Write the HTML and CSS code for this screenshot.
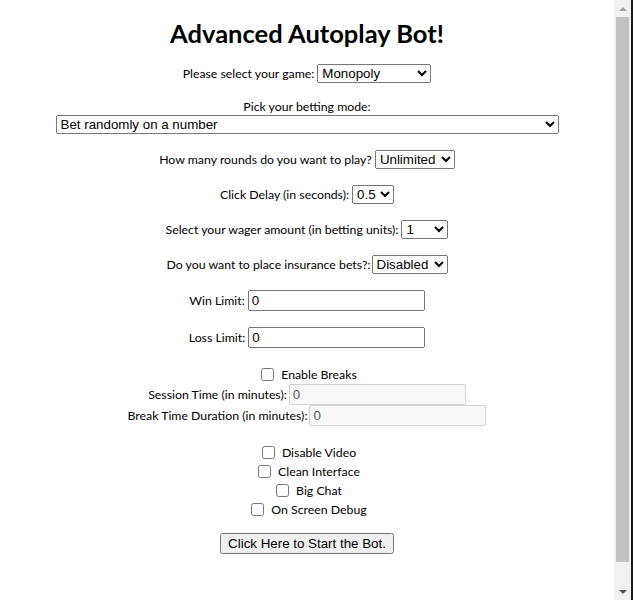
FILE: index.html
```html
<!DOCTYPE html>
<html lang="en">
<head>
<meta charset="utf-8">
<title>Advanced Autoplay Bot</title>
<link rel="stylesheet" href="styles.css">
</head>
<body>
<main class="page">
  <h1 class="title">Advanced Autoplay Bot!</h1>

  <div class="row row-game">
    <label class="lbl" for="game">Please select your game:</label>
    <select id="game" class="sel sel-game">
      <option>Monopoly</option>
      <option>Crazy Time</option>
      <option>Dream Catcher</option>
    </select>
  </div>

  <div class="row row-pick"><label class="lbl" for="mode">Pick your betting mode:</label></div>
  <div class="row row-mode">
    <select id="mode" class="sel sel-mode">
      <option>Bet randomly on a number</option>
    </select>
  </div>

  <div class="row row-std">
    <label class="lbl" for="rounds">How many rounds do you want to play?</label>
    <select id="rounds" class="sel sel-rounds"><option>Unlimited</option></select>
  </div>

  <div class="row row-std">
    <label class="lbl" for="delay">Click Delay (in seconds):</label>
    <select id="delay" class="sel sel-delay"><option>0.5</option></select>
  </div>

  <div class="row row-std">
    <label class="lbl" for="wager">Select your wager amount (in betting units):</label>
    <select id="wager" class="sel sel-wager"><option>1</option></select>
  </div>

  <div class="row row-std row-tight">
    <label class="lbl" for="ins">Do you want to place insurance bets?:</label>
    <select id="ins" class="sel sel-ins"><option>Disabled</option></select>
  </div>

  <div class="row row-std">
    <label class="lbl" for="win">Win Limit:</label>
    <input id="win" class="txt" type="text" value="0">
  </div>

  <div class="row row-std">
    <label class="lbl" for="loss">Loss Limit:</label>
    <input id="loss" class="txt" type="text" value="0">
  </div>

  <div class="row row-enable">
    <input id="breaks" class="chk" type="checkbox">
    <label class="lbl" for="breaks">Enable Breaks</label>
  </div>
  <div class="row row-stack">
    <label class="lbl" for="session">Session Time (in minutes):</label>
    <input id="session" class="txt" type="text" value="0" disabled>
  </div>
  <div class="row row-stack">
    <label class="lbl" for="breakdur">Break Time Duration (in minutes):</label>
    <input id="breakdur" class="txt" type="text" value="0" disabled>
  </div>

  <div class="row row-chk row-first">
    <input id="video" class="chk" type="checkbox">
    <label class="lbl" for="video">Disable Video</label>
  </div>
  <div class="row row-chk">
    <input id="clean" class="chk" type="checkbox">
    <label class="lbl" for="clean">Clean Interface</label>
  </div>
  <div class="row row-chk">
    <input id="chat" class="chk" type="checkbox">
    <label class="lbl" for="chat">Big Chat</label>
  </div>
  <div class="row row-chk">
    <input id="debug" class="chk" type="checkbox">
    <label class="lbl" for="debug">On Screen Debug</label>
  </div>

  <div class="row row-btn">
    <button class="btn" type="button">Click Here to Start the Bot.</button>
  </div>
</main>
<aside class="scrollbar" aria-hidden="true">
  <div class="sb-btn"><span class="arrow-up"></span></div>
  <div class="sb-track"><div class="sb-thumb"></div></div>
  <div class="sb-btn"><span class="arrow-down"></span></div>
</aside>
<div class="edge"></div>
</body>
</html>
```
FILE: styles.css
```css
html, body {
  margin: 0;
  padding: 0;
  background: #ffffff;
}
body {
  display: flex;
  height: 600px;
  overflow: hidden;
  font-family: "Lato", "Open Sans", sans-serif;
  font-size: 12.3px;
  color: #000;
}
.page {
  flex: 1;
  display: flex;
  flex-direction: column;
  align-items: stretch;
}
.title {
  margin: 0;
  padding-top: 19px;
  font-size: 25.5px;
  line-height: 29px;
  font-weight: 700;
  text-align: center;
}
.row {
  display: flex;
  justify-content: center;
  align-items: center;
  gap: 3px;
}
.lbl {
  line-height: 17px;
  white-space: nowrap;
}
.row-game { margin-top: 16px; }
.row-pick { margin-top: 15px; }
.row-std { margin-top: 16px; }
.row-tight { gap: 1px; }
.row-enable { margin-top: 17px; height: 19px; gap: 7px; }
.row-stack { gap: 2px; }
.row-chk { height: 19px; gap: 7px; }
.row-first { margin-top: 17px; }
.row-btn { margin-top: 14px; }

.sel {
  font-family: "Liberation Sans", Arial, sans-serif;
  font-size: 13.333px;
  height: 19px;
  margin: 0;
  box-sizing: border-box;
}
.sel-game { width: 114px; }
.sel-mode { width: 503px; }
.sel-rounds { width: 80px; }
.sel-delay { width: 42px; }
.sel-wager { width: 47px; }
.sel-ins { width: 76px; }

.txt {
  font-family: "Liberation Sans", Arial, sans-serif;
  font-size: 13.333px;
  width: 177px;
  height: 21px;
  box-sizing: border-box;
  margin: 0;
}
.chk {
  margin: 0 0 0 4px;
  width: 13px;
  height: 13px;
}
.btn {
  font-family: "Liberation Sans", Arial, sans-serif;
  font-size: 13.333px;
  height: 21px;
  margin: 0;
}

.scrollbar {
  width: 17px;
  background: #f1f1f1;
  display: flex;
  flex-direction: column;
}
.sb-btn {
  height: 17px;
  display: flex;
  align-items: center;
  justify-content: center;
}
.arrow-up {
  width: 0;
  height: 0;
  border-left: 4px solid transparent;
  border-right: 4px solid transparent;
  border-bottom: 4px solid #a3a3a3;
}
.arrow-down {
  width: 0;
  height: 0;
  border-left: 4px solid transparent;
  border-right: 4px solid transparent;
  border-top: 4px solid #505050;
}
.sb-track {
  flex: 1;
  padding: 0 2px 21px;
}
.sb-thumb {
  height: 100%;
  background: #c1c1c1;
}
.edge {
  width: 2px;
  background: #1a1a1a;
}
```
